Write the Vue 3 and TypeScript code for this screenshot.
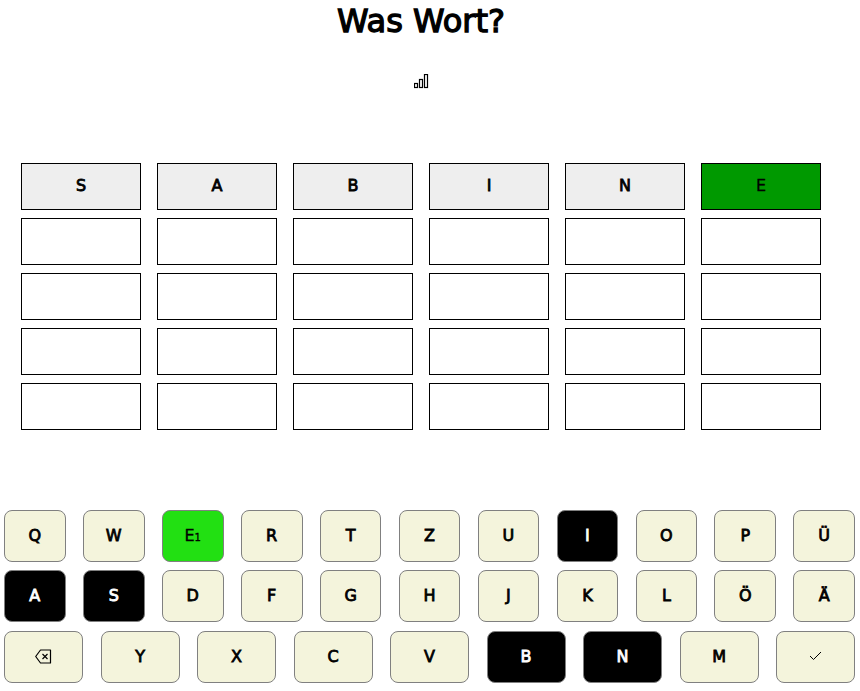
<script setup lang="ts">
interface Key {
  label: string;
  kind?: "used" | "hit";
  count?: number;
  icon?: "back" | "ok";
}

const guess = ["S", "A", "B", "I", "N", "E"];
const emptyRows = [1, 2, 3, 4];

const keyRows: Key[][] = [
  [
    { label: "Q" }, { label: "W" }, { label: "E", kind: "hit", count: 1 }, { label: "R" },
    { label: "T" }, { label: "Z" }, { label: "U" }, { label: "I", kind: "used" },
    { label: "O" }, { label: "P" }, { label: "Ü" },
  ],
  [
    { label: "A", kind: "used" }, { label: "S", kind: "used" }, { label: "D" }, { label: "F" },
    { label: "G" }, { label: "H" }, { label: "J" }, { label: "K" },
    { label: "L" }, { label: "Ö" }, { label: "Ä" },
  ],
  [
    { label: "", icon: "back" }, { label: "Y" }, { label: "X" }, { label: "C" }, { label: "V" },
    { label: "B", kind: "used" }, { label: "N", kind: "used" }, { label: "M" }, { label: "", icon: "ok" },
  ],
];
</script>

<template>
  <div class="page">
    <div class="top">
      <h1 class="title">Was Wort?</h1>
      <button class="stats" aria-label="Statistik">
        <svg width="15" height="15" viewBox="0 0 15 15" fill="#fff" stroke="#000" stroke-width="1.2">
          <rect x="0.5" y="9.5" width="3" height="4" />
          <rect x="5.5" y="5.5" width="3" height="8" />
          <rect x="10.5" y="0.5" width="3" height="13" />
        </svg>
      </button>
      <div class="board">
        <div class="board-row">
          <div
            v-for="(letter, i) in guess"
            :key="letter"
            class="cell"
            :class="i === 5 ? 'cell-right' : 'cell-wrong'"
          >{{ letter }}</div>
        </div>
        <div v-for="r in emptyRows" :key="r" class="board-row">
          <div v-for="c in 6" :key="c" class="cell"></div>
        </div>
      </div>
    </div>

    <div class="keyboard">
      <div v-for="(row, ri) in keyRows" :key="ri" class="key-row" :class="{ wide: ri === 2 }">
        <button
          v-for="(k, ki) in row"
          :key="ki"
          class="key"
          :class="k.kind"
        >
          <svg v-if="k.icon === 'back'" width="17" height="15" viewBox="0 0 17 15" fill="none" stroke="#000" stroke-width="1.2">
            <path d="M5.5 1H15.5V14H5.5L0.7 7.5Z" stroke-linejoin="round" />
            <path d="M7.5 5L12.5 10M12.5 5L7.5 10" />
          </svg>
          <svg v-else-if="k.icon === 'ok'" width="13" height="10" viewBox="0 0 13 10" fill="none" stroke="#000" stroke-width="1">
            <path d="M1 5L4.5 8.5L12 1" />
          </svg>
          <template v-else>{{ k.label }}<span v-if="k.count" class="count">{{ k.count }}</span></template>
        </button>
      </div>
    </div>
  </div>
</template>

<style>
body {
  background: #fff;
}
</style>

<style scoped>
.page {
  width: 860px;
  height: 691px;
  font-family: "DejaVu Sans", sans-serif;
  color: #000;
}

.top {
  width: 842px;
  display: flex;
  flex-direction: column;
  align-items: center;
}

.title {
  margin: 0;
  padding-top: 2px;
  height: 40px;
  line-height: 38px;
  font-size: 32px;
  font-weight: 400;
  -webkit-text-stroke: 1.3px #000;
}

.stats {
  margin-top: 32px;
  padding: 0;
  border: 0;
  background: none;
  height: 15px;
  display: flex;
}

.board {
  margin-top: 74px;
  display: flex;
  flex-direction: column;
  gap: 8px;
}

.board-row {
  display: flex;
  gap: 16px;
}

.cell {
  width: 120px;
  height: 47px;
  box-sizing: border-box;
  padding-bottom: 2px;
  border: 1px solid #000;
  display: flex;
  align-items: center;
  justify-content: center;
  font-size: 16px;
  -webkit-text-stroke: 0.8px #000;
}

.cell-wrong {
  background: #eeeeee;
}

.cell-right {
  background: #009900;
  -webkit-text-stroke: 0.3px #000;
}

.keyboard {
  margin-top: 80px;
  padding: 0 4.8px 0 4px;
  display: flex;
  flex-direction: column;
  gap: 8.25px;
}

.key-row {
  display: flex;
  justify-content: space-between;
}

.key {
  width: 61.7px;
  height: 52px;
  padding: 0 0 1px;
  box-sizing: border-box;
  border: 1px solid #808080;
  border-radius: 8px;
  background: #f4f4dc;
  color: #000;
  font-family: inherit;
  font-size: 16px;
  font-weight: 400;
  -webkit-text-stroke: 0.8px #000;
  display: flex;
  align-items: center;
  justify-content: center;
}

.wide .key {
  width: 79px;
}

.key.used {
  background: #000;
  color: #fff;
  -webkit-text-stroke: 0.8px #fff;
}

.key.hit {
  background: #22e012;
  -webkit-text-stroke: 0.3px #000;
}

.count {
  font-size: 10px;
  margin-top: 4px;
}
</style>
